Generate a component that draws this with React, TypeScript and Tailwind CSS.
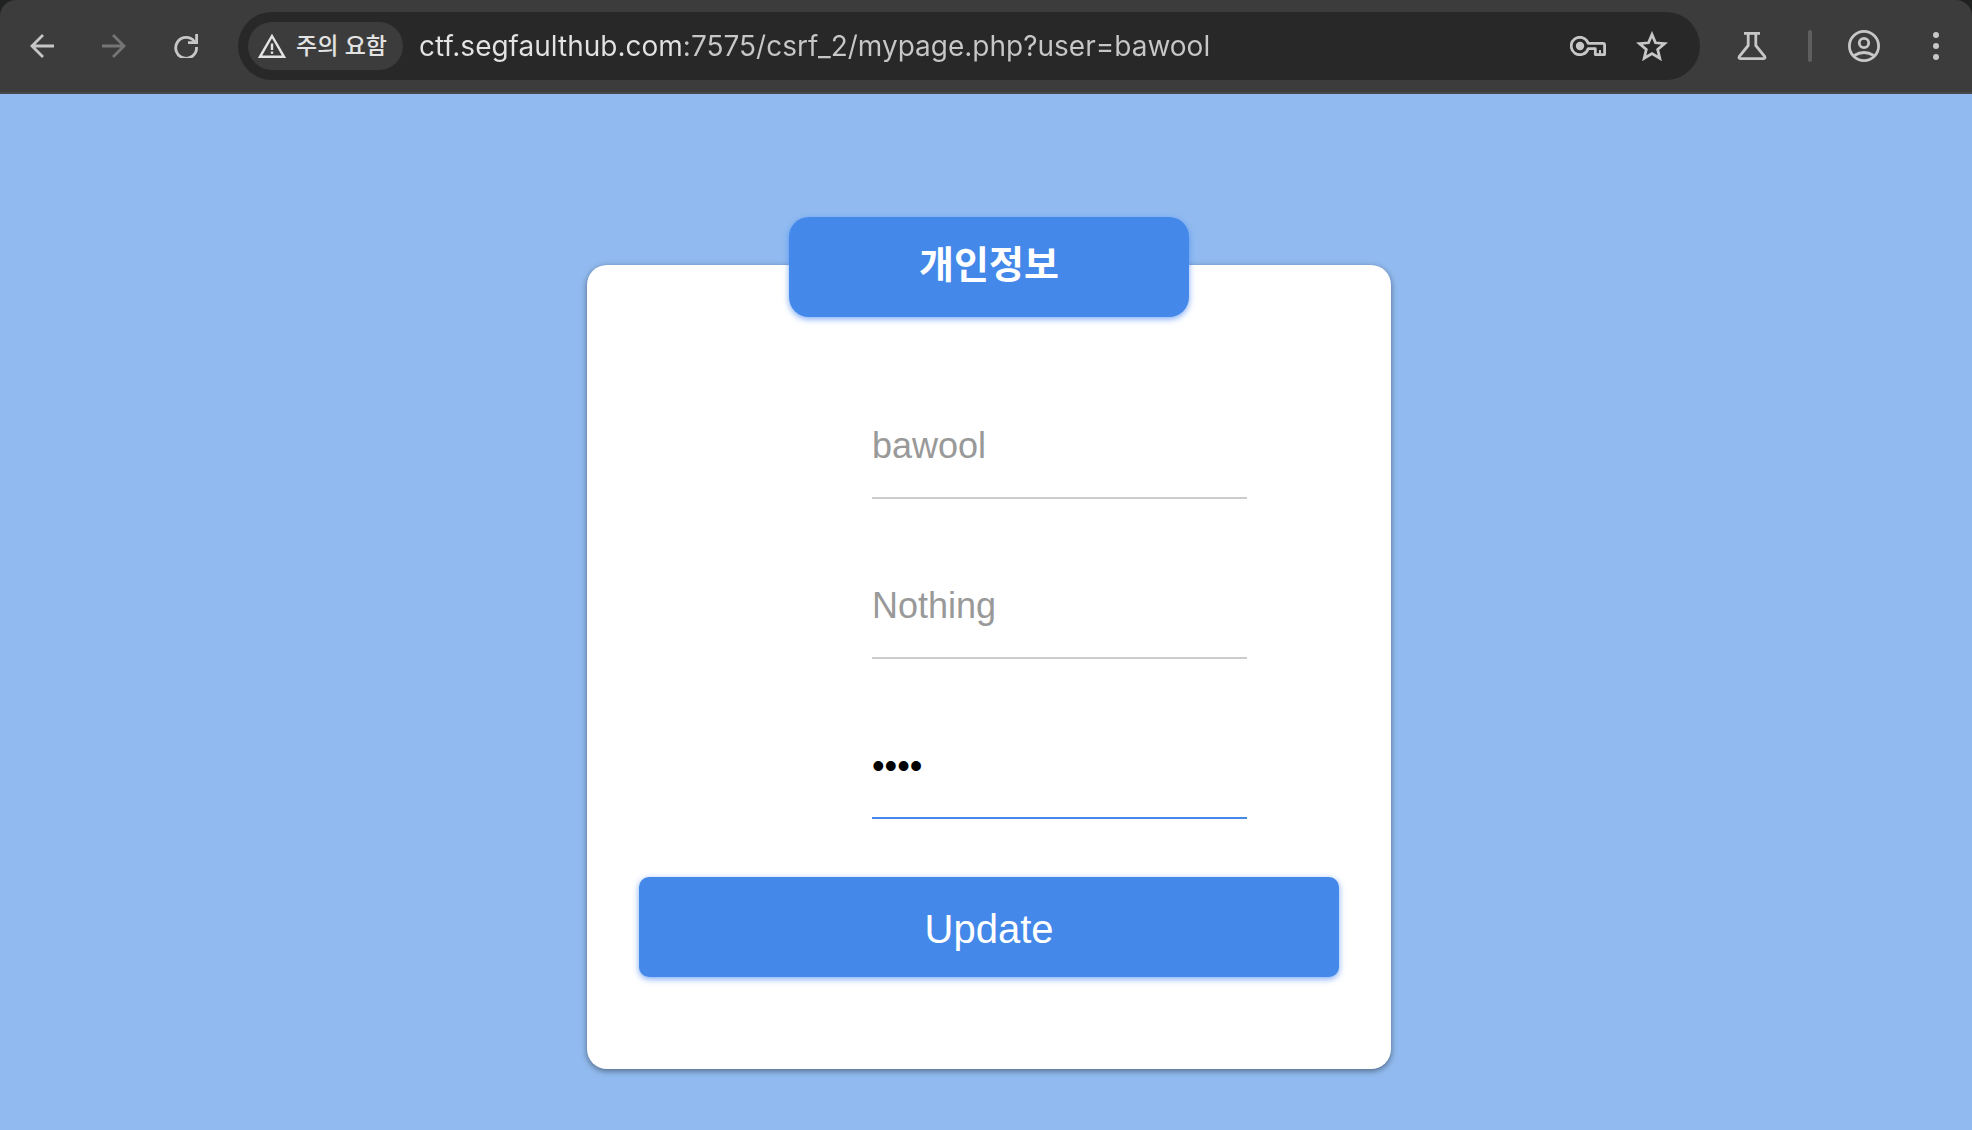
import { useState, FormEvent, ReactNode } from "react";

const BackIcon = () => (
  <svg className="size-6" viewBox="0 0 24 24" fill="none" stroke="currentColor" strokeWidth="2.8">
    <path d="M24 12H2M13 1L2 12l11 11" />
  </svg>
);

const ForwardIcon = () => (
  <svg className="size-6" viewBox="0 0 24 24" fill="none" stroke="currentColor" strokeWidth="2.8">
    <path d="M0 12h22M11 1l11 11-11 11" />
  </svg>
);

const ReloadIcon = () => (
  <svg className="size-6" viewBox="0 0 24 24" fill="none" stroke="currentColor" strokeWidth="2.8">
    <path d="M20.6 7.8A10.4 10.4 0 1 0 22.5 13" />
    <path d="M22.6 0v8.6H14" />
  </svg>
);

const WarningIcon = () => (
  <svg className="h-6 w-7 shrink-0" viewBox="0 0 28 24" fill="none" stroke="currentColor" strokeWidth="2.4">
    <path d="M14 2L26 22.8H2z" />
    <path d="M14 9.5v6.5M14 17.5v2.2" />
  </svg>
);

const KeyIcon = () => (
  <svg className="h-5 w-9" viewBox="0 0 36 20" fill="none" stroke="currentColor" strokeWidth="2.8">
    <path d="M18.2 7.3A8.7 8.7 0 1 0 18.2 12.7H25.3V18.6H34.6V9Q34.6 7.3 33 7.3Z" strokeLinejoin="round" />
    <path d="M30 18.5V14" strokeWidth="2" />
    <circle cx="10" cy="10" r="4.2" fill="currentColor" stroke="none" />
  </svg>
);

const StarIcon = () => (
  <svg className="h-[30px] w-8" viewBox="0 0 32 30" fill="none" stroke="currentColor" strokeWidth="2.8">
    <path d="M16 3.5l3.5 8.3 9.1.8-6.9 5.9 2.1 8.8L16 22.6l-7.8 4.7 2.1-8.8-6.9-5.9 9.1-.8z" />
  </svg>
);

const FlaskIcon = () => (
  <svg className="h-7 w-[30px]" viewBox="0 0 30 28" fill="none" stroke="currentColor" strokeWidth="2.8" strokeLinejoin="round">
    <path d="M7 1.4h16" />
    <path d="M11.2 1.5v12L2.4 24.3Q1.2 26.6 3.4 26.6h23.2Q28.8 26.6 27.6 24.3L18.8 13.5v-12" />
  </svg>
);

const ProfileIcon = () => (
  <svg className="size-8" viewBox="0 0 32 32" fill="none" stroke="currentColor" strokeWidth="2.8">
    <circle cx="16" cy="16" r="14.6" />
    <circle cx="16" cy="13" r="4.7" />
    <path d="M6.2 25.5Q16 19.5 25.8 25.5" />
  </svg>
);

const MenuIcon = () => (
  <svg className="h-7 w-2" viewBox="0 0 8 28" fill="currentColor">
    <circle cx="4" cy="3" r="3" />
    <circle cx="4" cy="14" r="3" />
    <circle cx="4" cy="25" r="3" />
  </svg>
);

const IconButton = ({ label, className = "", children }: { label: string; className?: string; children: ReactNode }) => (
  <button type="button" aria-label={label} className={`flex shrink-0 items-center justify-center ${className}`}>
    {children}
  </button>
);

const Toolbar = () => {
  const [url, setUrl] = useState("ctf.segfaulthub.com:7575/csrf_2/mypage.php?user=bawool");

  return (
    <div className="bg-[#202222]">
      <header className="flex h-[94px] items-center rounded-t-2xl border-b-2 border-[#484848] bg-[#3c3c3c] pr-8 pl-[30px] text-[#c7c7c7]">
        <nav className="mr-10 flex shrink-0 gap-12">
          <IconButton label="뒤로">
            <BackIcon />
          </IconButton>
          <IconButton label="앞으로" className="text-[#757575]">
            <ForwardIcon />
          </IconButton>
          <IconButton label="새로고침">
            <ReloadIcon />
          </IconButton>
        </nav>
        <div className="flex h-[68px] min-w-0 flex-1 items-center rounded-full bg-[#282828] pr-8 pl-[10px]">
          <button
            type="button"
            className="flex h-12 shrink-0 items-center gap-[10px] rounded-full bg-[#3c3c3c] pr-4 pl-[10px] text-[23px] font-medium whitespace-nowrap text-[#e3e3e3]"
          >
            <WarningIcon />
            주의 요함
          </button>
          {/* host part is brighter than the path */}
          <input
            type="text"
            aria-label="주소창"
            value={url}
            onChange={(e) => setUrl(e.target.value)}
            className="ml-4 h-10 min-w-0 flex-1 bg-[linear-gradient(90deg,#e3e3e3_265px,#c7c7c7_265px)] bg-clip-text font-[Inter,sans-serif] text-[28px] text-[#c7c7c7] outline-none [-webkit-text-fill-color:transparent]"
          />
          <div className="flex shrink-0 items-center gap-[30px]">
            <IconButton label="비밀번호 관리">
              <KeyIcon />
            </IconButton>
            <IconButton label="북마크">
              <StarIcon />
            </IconButton>
          </div>
        </div>
        <div className="ml-[37px] flex shrink-0 items-center">
          <IconButton label="실험실">
            <FlaskIcon />
          </IconButton>
          <span className="ml-[41px] h-8 w-1 rounded-full bg-[#5e5e5e]" />
          <IconButton label="프로필" className="ml-9">
            <ProfileIcon />
          </IconButton>
          <IconButton label="메뉴" className="ml-[52px]">
            <MenuIcon />
          </IconButton>
        </div>
      </header>
    </div>
  );
};

const fieldClass =
  "h-[104px] w-[375px] border-b-2 bg-transparent text-4xl text-black outline-none placeholder:text-[#999999]";

const MyPage = () => {
  const [info, setInfo] = useState("");
  const [password, setPassword] = useState("1234");

  const handleSubmit = (e: FormEvent) => {
    e.preventDefault();
  };

  return (
    <main className="flex flex-1 flex-col items-center pt-[171px] pb-14 pl-[6px]">
      <form
        onSubmit={handleSubmit}
        className="flex w-[804px] max-w-full flex-col items-center rounded-[20px] bg-white px-[52px] pb-[92px] shadow-[0_2px_6px_rgba(0,0,0,0.45)]"
      >
        <h1 className="-mt-12 flex h-[100px] w-[400px] justify-center rounded-[20px] bg-[#4489ea] pt-5 text-[38px] leading-[56px] font-bold text-white shadow-[0_2px_6px_rgba(66,133,244,0.7)]">
          개인정보
        </h1>
        <div className="mt-[78px] ml-[141px] flex flex-col gap-14">
          <input
            type="text"
            aria-label="아이디"
            placeholder="bawool"
            readOnly
            className={`${fieldClass} border-[#cccccc]`}
          />
          <input
            type="text"
            aria-label="정보"
            placeholder="Nothing"
            value={info}
            onChange={(e) => setInfo(e.target.value)}
            className={`${fieldClass} border-[#cccccc]`}
          />
          <input
            type="password"
            aria-label="비밀번호"
            value={password}
            onChange={(e) => setPassword(e.target.value)}
            className={`${fieldClass} border-[#4489ea]`}
          />
        </div>
        <button
          type="submit"
          className="mt-[58px] h-[100px] w-full rounded-[10px] bg-[#4489ea] pt-1 text-[40px] text-white shadow-[0_2px_6px_rgba(66,133,244,0.7)]"
        >
          Update
        </button>
      </form>
    </main>
  );
};

const App = () => (
  <div className="flex min-h-screen flex-col bg-[#91bbf0] font-['Liberation_Sans','Noto_Sans_CJK_KR',sans-serif]">
    <Toolbar />
    <MyPage />
  </div>
);

export default App;
